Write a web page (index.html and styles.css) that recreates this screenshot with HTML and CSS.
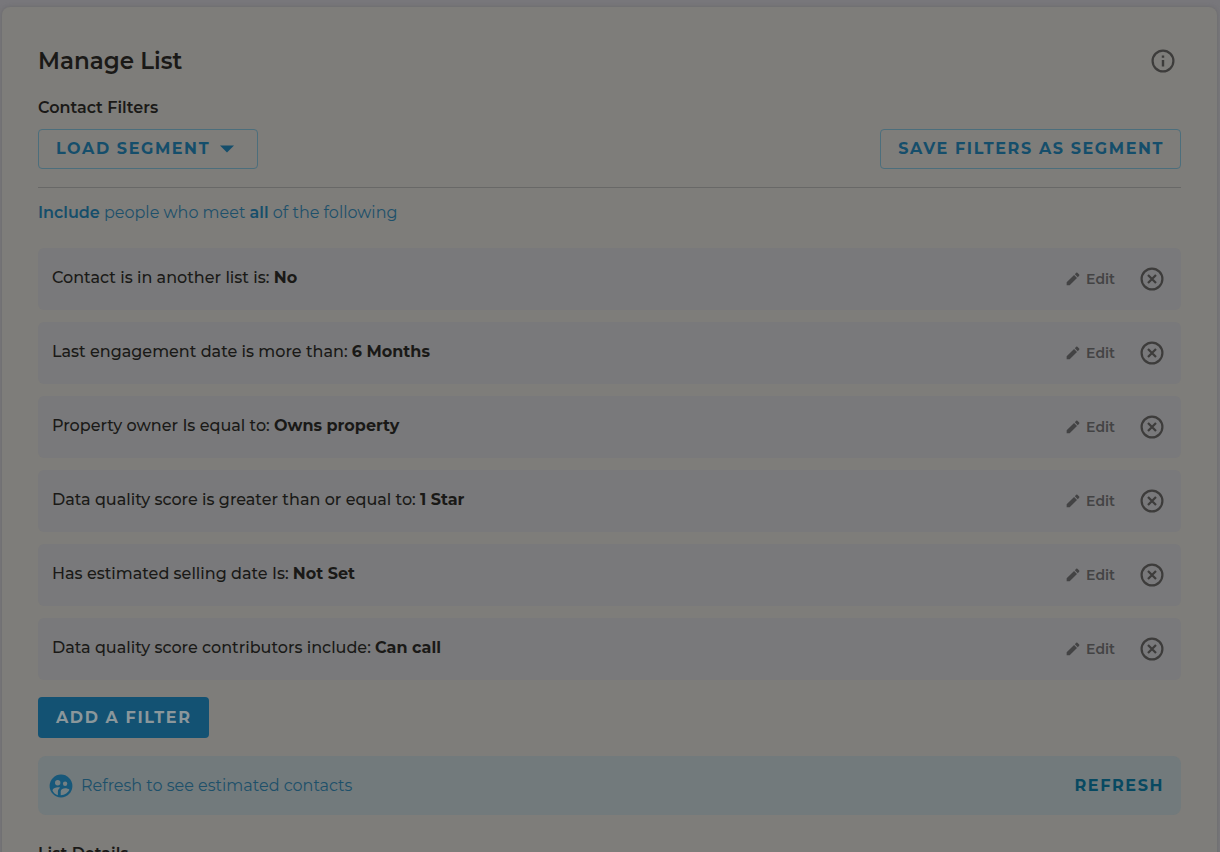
FILE: index.html
```html
<!DOCTYPE html>
<html lang="en">
<head>
<meta charset="utf-8">
<meta name="viewport" content="width=device-width, initial-scale=1">
<title>Manage List</title>
<link rel="stylesheet" href="styles.css">
</head>
<body>
<svg class="sprite" aria-hidden="true">
  <symbol id="pencil" viewBox="0 0 24 24"><path d="M2.500 17V21.500h4.500L18 10.400 13.600 6 2.500 17zM21.200 7.200a1.300 1.300 0 0 0 0-1.800l-2.600-2.600a1.300 1.300 0 0 0-1.800 0l-2 2 4.400 4.400 2-2z"/></symbol>
  <symbol id="remove" viewBox="0 0 24 24"><circle cx="12" cy="12" r="10.4" fill="none" stroke="currentColor" stroke-width="2.200"/><path d="M8 8l8 8M16 8l-8 8" fill="none" stroke="currentColor" stroke-width="2.200"/></symbol>
</svg>
<main class="card">
  <header class="card-header">
    <h1 class="title">Manage List</h1>
    <button class="icon-button" type="button" aria-label="Information">
      <svg class="icon" viewBox="0 0 24 24"><circle cx="12" cy="12" r="10.4" fill="none" stroke="currentColor" stroke-width="2.200"/><path d="M10.800 6.500h2.400v2.200h-2.400zM10.800 11h2.400v6.500h-2.400z"/></svg>
    </button>
  </header>
  <section class="filters">
    <h2 class="subtitle">Contact Filters</h2>
    <div class="toolbar">
      <button class="button outline load" type="button">LOAD SEGMENT
        <svg class="caret" viewBox="0 0 14 8"><path d="M0 0.5h14L7 7.5z"/></svg>
      </button>
      <button class="button outline" type="button">SAVE FILTERS AS SEGMENT</button>
    </div>
    <p class="rule"><strong>Include</strong> people who meet <strong>all</strong> of the following</p>
    <ul class="filter-list">
      <li class="filter"><p class="filter-text">Contact is in another list is: <strong>No</strong></p><button class="edit" type="button"><svg class="pencil"><use href="#pencil"/></svg>Edit</button><button class="icon-button" type="button" aria-label="Remove filter"><svg class="icon"><use href="#remove"/></svg></button></li>
      <li class="filter"><p class="filter-text">Last engagement date is more than: <strong>6 Months</strong></p><button class="edit" type="button"><svg class="pencil"><use href="#pencil"/></svg>Edit</button><button class="icon-button" type="button" aria-label="Remove filter"><svg class="icon"><use href="#remove"/></svg></button></li>
      <li class="filter"><p class="filter-text">Property owner Is equal to: <strong>Owns property</strong></p><button class="edit" type="button"><svg class="pencil"><use href="#pencil"/></svg>Edit</button><button class="icon-button" type="button" aria-label="Remove filter"><svg class="icon"><use href="#remove"/></svg></button></li>
      <li class="filter"><p class="filter-text">Data quality score is greater than or equal to: <strong>1 Star</strong></p><button class="edit" type="button"><svg class="pencil"><use href="#pencil"/></svg>Edit</button><button class="icon-button" type="button" aria-label="Remove filter"><svg class="icon"><use href="#remove"/></svg></button></li>
      <li class="filter"><p class="filter-text">Has estimated selling date Is: <strong>Not Set</strong></p><button class="edit" type="button"><svg class="pencil"><use href="#pencil"/></svg>Edit</button><button class="icon-button" type="button" aria-label="Remove filter"><svg class="icon"><use href="#remove"/></svg></button></li>
      <li class="filter"><p class="filter-text">Data quality score contributors include: <strong>Can call</strong></p><button class="edit" type="button"><svg class="pencil"><use href="#pencil"/></svg>Edit</button><button class="icon-button" type="button" aria-label="Remove filter"><svg class="icon"><use href="#remove"/></svg></button></li>
    </ul>
    <button class="button primary" type="button">ADD A FILTER</button>
    <div class="estimate">
      <svg class="people" viewBox="0 0 24 24"><circle cx="12" cy="12" r="11.4"/><g class="people-shape"><circle cx="8.7" cy="8.700" r="2.700"/><circle cx="16.1" cy="9.7" r="2.2"/><path d="M3.4 16.200C4.300 14.200 6.700 13.300 8.900 13.300c.8 0 1.600.1 2.300.4-1.500 1-2.300 2.300-2.300 3.700v3.900C6.400 20.500 4.400 18.700 3.4 16.200z"/><path d="M16.100 14.200c1.700 0 3.400.5 4.400 1.500-1.400 3-4.400 5.300-8.800 5.500v-3.900c0-2.100 2.500-3.100 4.400-3.100z"/></g></svg>
      <p class="estimate-text">Refresh to see estimated contacts</p>
      <button class="refresh" type="button">REFRESH</button>
    </div>
  </section>
  <h2 class="subtitle details">List Details</h2>
</main>
</body>
</html>
```
FILE: styles.css
```css
* { box-sizing: border-box; }
html { background: #78777b; }
html, body { height: 100%; overflow: hidden; }
body { margin: 0; padding: 7px 3px 0 2px; font: 500 16px/24px Montserrat, Inter, sans-serif; color: #1a1917; }
h1, h2, p, ul { margin: 0; padding: 0; }
button { font: inherit; color: inherit; background: none; border: 0; padding: 0; cursor: pointer; }
svg { fill: currentColor; flex: none; }
strong { font-weight: 700; }
.sprite { position: absolute; width: 0; height: 0; }
.card { min-height: 100%; padding: 36px; background: #7e7d7a; border-radius: 8px 8px 0 0; box-shadow: 0 0 4px #68686a; }
.card-header { display: flex; align-items: center; justify-content: space-between; height: 36px; padding-right: 6px; }
.title { font-size: 23px; line-height: 32px; font-weight: 600; }
.icon-button { display: flex; color: #3d3c3b; }
.icon { width: 24px; height: 24px; }
.subtitle { font-size: 16px; line-height: 24px; font-weight: 600; }
.filters { padding-top: 17px; }
.toolbar { display: flex; justify-content: space-between; margin-top: 9px; padding-bottom: 18px; border-bottom: 1px solid #686867; }
.button { display: inline-flex; align-items: center; height: 40px; padding: 0 16px 0 17px; border-radius: 4px; font-weight: 700; letter-spacing: 0.1em; white-space: nowrap; }
.outline { border: 1px solid #4c6e7c; color: #154e6b; }
.load { gap: 10px; padding-right: 23px; }
.caret { width: 14px; height: 8px; }
.rule { margin-top: 13px; font-weight: 400; color: #1d506a; }
.rule strong { font-weight: 600; color: #154e6b; }
.filter-list { display: grid; gap: 12px; margin-top: 23px; list-style: none; }
.filter { display: flex; align-items: center; min-height: 62px; padding: 0 17px 1px 14px; border-radius: 6px; background: #79797b; }
.filter-text { flex: 1; padding-bottom: 1px; }
.edit { display: flex; align-items: center; gap: 5px; margin-right: 25px; font-size: 14px; font-weight: 600; color: #434344; }
.pencil { width: 16px; height: 16px; }
.primary { height: 41px; margin-top: 17px; padding: 0 17px 0 18px; background: #135273; color: #8b979b; }
.estimate { display: flex; align-items: center; gap: 8px; min-height: 59px; margin-top: 18px; padding: 0 17px 0 11px; border-radius: 8px; background: #727a7c; color: #1d506a; }
.people { width: 24px; height: 24px; color: #17587a; }
.people-shape { fill: #758083; }
.estimate-text { flex: 1; font-weight: 400; }
.refresh { font-weight: 700; letter-spacing: 0.1em; color: #084961; }
.details { margin-top: 27px; }
```
